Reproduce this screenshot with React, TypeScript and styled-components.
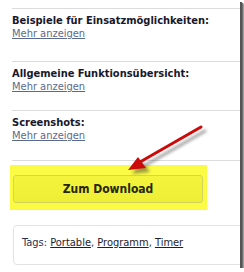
import React from "react";
import styled, { createGlobalStyle } from "styled-components";

const Global = createGlobalStyle`
  html, body { margin: 0; padding: 0; background: #fff; }
  body { font-family: "DejaVu Sans Condensed", "DejaVu Sans", Verdana, sans-serif; }
`;

const Frame = styled.div`
  position: relative;
  width: 240px;
  height: 268px;
  background: #fff;
  overflow: hidden;
  padding-top: 8px;
  box-sizing: border-box;
  box-shadow: 2px 2px 0 #555, 3px 3px 1px #707070, 4px 4px 1px #a8a8a8;
`;

const Content = styled.div`
  padding-left: 12px;
  display: flex;
  flex-direction: column;
`;

const Section = styled.div<{ $h: number }>`
  box-sizing: border-box;
  height: ${(p) => p.$h}px;
  border-top: 1px solid #dcdcdc;
  padding-top: 5px;
  display: flex;
  flex-direction: column;
`;

const Heading = styled.div`
  font-size: 11px;
  line-height: 13px;
  font-weight: bold;
  color: #18182a;
`;

const MoreLink = styled.a`
  font-size: 11px;
  line-height: 13px;
  color: #5b6a8c;
  text-decoration: underline;
  align-self: flex-start;
`;

const DownloadSection = styled.div`
  border-top: 1px solid #dcdcdc;
  padding-top: 4px;
`;

const Highlight = styled.div`
  margin-left: -2px;
  width: 197px;
  height: 45px;
  background: #fbfb46;
  box-sizing: border-box;
  padding: 10px 0 0 3px;
`;

const Button = styled.div`
  box-sizing: border-box;
  width: 190px;
  height: 28px;
  border: 1px solid #d4d45a;
  border-radius: 3px;
  background: linear-gradient(#f4f43c, #eeee36);
  display: flex;
  align-items: center;
  justify-content: center;
  font-size: 12px;
  font-weight: bold;
  color: #26260e;
`;

const TagsBox = styled.div`
  box-sizing: border-box;
  margin-top: 15px;
  margin-left: 1px;
  width: 240px;
  height: 40px;
  border: 1px solid #e2e2e2;
  border-radius: 4px;
  padding: 10px 0 0 8px;
  font-size: 11px;
  line-height: 13px;
  color: #2e3050;
`;

const Tag = styled.a`
  color: #1e1e2e;
  text-decoration: underline;
`;

const Overlay = styled.svg`
  position: absolute;
  left: 0;
  top: 0;
  pointer-events: none;
`;

export default function App() {
  return (
    <>
      <Global />
      <Frame>
        <Content>
          <Section $h={53}>
            <Heading>Beispiele für Einsatzmöglichkeiten:</Heading>
            <MoreLink>Mehr anzeigen</MoreLink>
          </Section>
          <Section $h={49}>
            <Heading>Allgemeine Funktionsübersicht:</Heading>
            <MoreLink>Mehr anzeigen</MoreLink>
          </Section>
          <Section $h={50}>
            <Heading>Screenshots:</Heading>
            <MoreLink>Mehr anzeigen</MoreLink>
          </Section>
          <DownloadSection>
            <Highlight>
              <Button>Zum Download</Button>
            </Highlight>
          </DownloadSection>
          <TagsBox>
            Tags: <Tag>Portable</Tag>, <Tag>Programm</Tag>, <Tag>Timer</Tag>
          </TagsBox>
        </Content>
        <Overlay width="240" height="268" viewBox="0 0 240 268">
          <defs>
            <filter id="blur" x="-20%" y="-20%" width="140%" height="140%">
              <feGaussianBlur stdDeviation="1.6" />
            </filter>
          </defs>
          <g filter="url(#blur)" opacity="0.45" transform="translate(4 4)">
            <line x1="201" y1="127" x2="140" y2="162" stroke="#333" strokeWidth="3" strokeLinecap="round" />
            <polygon points="128,170 138,157 146,168" fill="#333" />
          </g>
          <line x1="201" y1="127" x2="140" y2="162" stroke="#cc0a0a" strokeWidth="3" strokeLinecap="round" />
          <polygon points="128,170 138,157 146,168" fill="#cc0a0a" />
        </Overlay>
      </Frame>
    </>
  );
}
